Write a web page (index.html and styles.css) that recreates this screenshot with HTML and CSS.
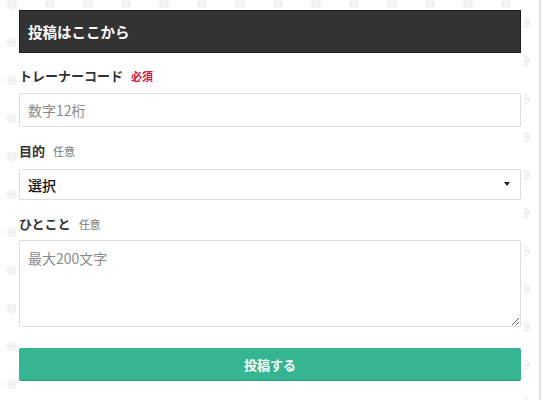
FILE: index.html
```html
<!DOCTYPE html>
<html lang="ja">
<head>
<meta charset="utf-8">
<title>投稿はここから</title>
<link rel="stylesheet" href="styles.css">
</head>
<body>
<div class="page">
  <form class="card">
    <div class="card-head">投稿はここから</div>
    <label class="field-label">トレーナーコード<span class="tag tag-required">必須</span></label>
    <input class="text-input" type="text" placeholder="数字12桁">
    <label class="field-label field-label--mid">目的<span class="tag">任意</span></label>
    <div class="select-wrap">
      <select class="select">
        <option>選択</option>
      </select>
    </div>
    <label class="field-label field-label--mid field-label--tight">ひとこと<span class="tag">任意</span></label>
    <textarea class="textarea" placeholder="最大200文字"></textarea>
    <button class="submit" type="button">投稿する</button>
  </form>
</div>
</body>
</html>
```

FILE: styles.css
```css
html, body {
  margin: 0;
  padding: 0;
  background: #fff;
}

body {
  font-family: "Noto Sans CJK JP", "Noto Sans", sans-serif;
  color: #333;
}

.page {
  width: 539px;
  min-height: 400px;
  padding-top: 8px;
  border-right: 2px solid #e2e2e2;
  background-color: #fff;
  background-image: url("data:image/svg+xml;utf8,<svg xmlns='http://www.w3.org/2000/svg' width='38' height='38'><g fill='%23f6f6f6' stroke='%23efefef' stroke-width='1.4'><circle cx='12' cy='4' r='4.5'/><path d='M7.5 4h9'/><circle cx='31' cy='23' r='4.5'/><path d='M26.5 23h9'/></g></svg>");
  background-size: 38px 38px;
  box-sizing: content-box;
}

.card {
  margin: 0 0 0 16px;
  width: 508px;
  padding: 2px 3px 20px;
  box-sizing: border-box;
  background: #fff;
  display: flex;
  flex-direction: column;
}

.card-head {
  height: 43px;
  box-sizing: border-box;
  border: 1px solid #1e1e1e;
  background: #333;
  color: #fff;
  font-size: 14.5px;
  font-weight: 700;
  display: flex;
  align-items: center;
  padding: 0 8px;
}

.field-label {
  margin-top: 13px;
  height: 20px;
  line-height: 20px;
  font-size: 13px;
  font-weight: 700;
  color: #333;
  display: flex;
  align-items: baseline;
}

.field-label--mid {
  margin-top: 14px;
}

.tag {
  margin-left: 8px;
  font-size: 11px;
  font-weight: 400;
  color: #777;
}

.tag-required {
  color: #d4163f;
  font-weight: 700;
}

.text-input {
  margin-top: 7px;
  height: 34px;
  box-sizing: border-box;
  border: 1px solid #dedede;
  border-radius: 2px;
  padding: 0 8px;
  font-family: inherit;
  font-size: 14px;
  color: #333;
  background: #fff;
  outline: none;
}

.text-input::placeholder,
.textarea::placeholder {
  color: #8a8a8a;
}

.select-wrap {
  margin-top: 8px;
  position: relative;
}

.select-wrap::after {
  content: "";
  position: absolute;
  right: 11px;
  top: 13px;
  border-left: 3.5px solid transparent;
  border-right: 3.5px solid transparent;
  border-top: 4px solid #222;
  pointer-events: none;
}

.select {
  display: block;
  width: 100%;
  height: 31px;
  box-sizing: border-box;
  border: 1px solid #dedede;
  border-radius: 2px;
  padding: 0 8px;
  font-family: inherit;
  font-size: 14px;
  font-weight: 500;
  color: #111;
  background: #fff;
  -webkit-appearance: none;
  appearance: none;
  outline: none;
}

.field-label--tight + .textarea {
  margin-top: 6px;
}

.textarea {
  height: 87px;
  box-sizing: border-box;
  border: 1px solid #dedede;
  border-radius: 2px;
  padding: 8px;
  font-family: inherit;
  font-size: 14px;
  line-height: 18px;
  color: #333;
  background: #fff;
  outline: none;
}

.submit {
  margin-top: 21px;
  height: 33px;
  border: 0;
  border-bottom: 1px solid #2c9c7c;
  border-radius: 2px;
  background: #35b591;
  color: #fff;
  font-family: inherit;
  font-size: 13px;
  font-weight: 700;
  cursor: pointer;
}
```
